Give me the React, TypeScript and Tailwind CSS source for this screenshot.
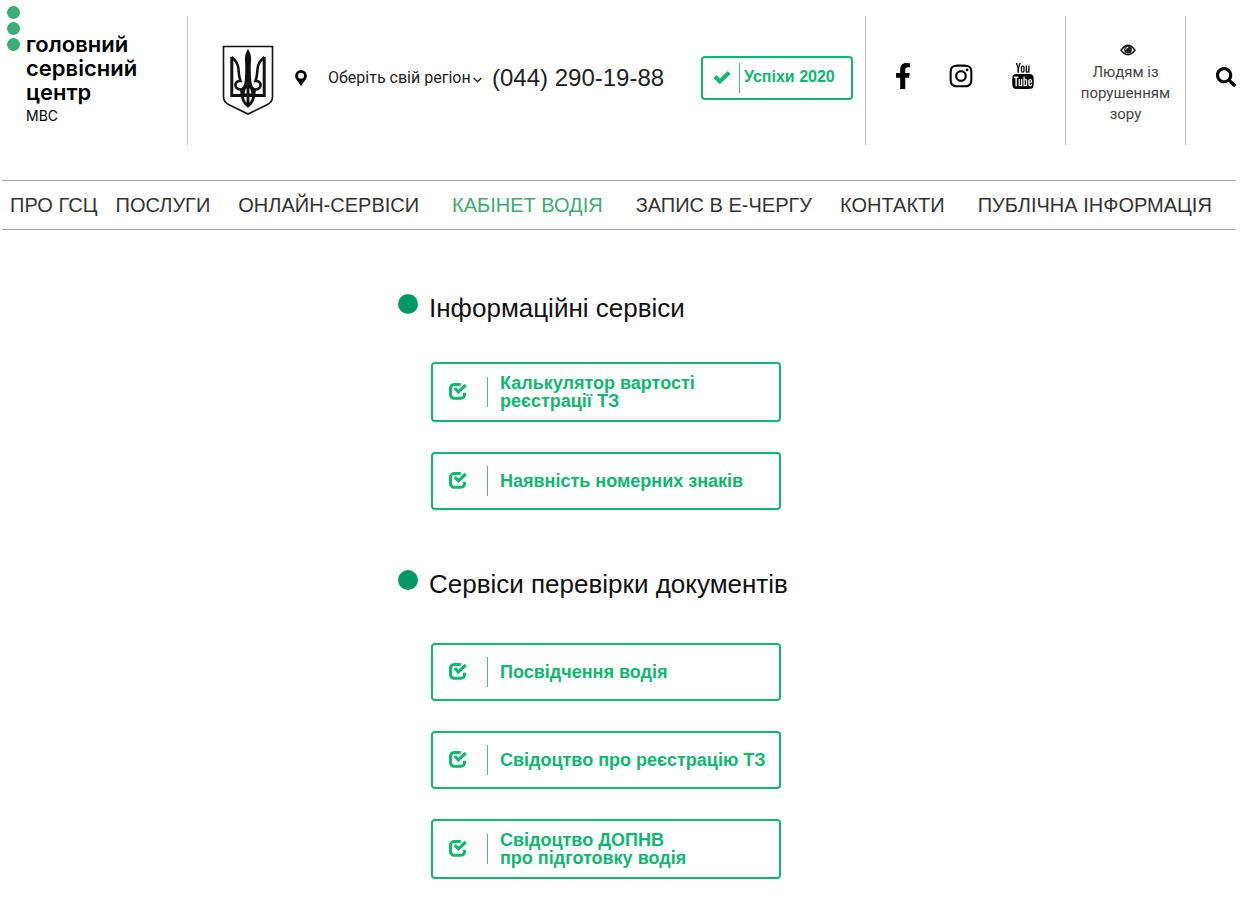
import clsx from "clsx";
import { FaFacebookF, FaInstagram, FaSearch } from "react-icons/fa";
import { TfiYoutube } from "react-icons/tfi";

const navItems = [
  { label: "ПРО ГСЦ", spacing: "ml-2" },
  { label: "ПОСЛУГИ", spacing: "ml-[18px]" },
  { label: "ОНЛАЙН-СЕРВІСИ", spacing: "ml-7" },
  { label: "КАБІНЕТ ВОДІЯ", spacing: "ml-[33px]", active: true },
  { label: "ЗАПИС В Е-ЧЕРГУ", spacing: "ml-[33px]" },
  { label: "КОНТАКТИ", spacing: "ml-7" },
  { label: "ПУБЛІЧНА ІНФОРМАЦІЯ", spacing: "ml-[33px]" },
];

const CheckBoxIcon = () => (
  <svg viewBox="0 0 18 18" className="h-[18px] w-[18px] shrink-0" fill="none" stroke="currentColor" aria-hidden="true">
    <path d="M11.800 1.500H5A3.600 3.600 0 0 0 1.500 5.100v6.500A3.600 3.600 0 0 0 5 15.200h7.100a3.400 3.400 0 0 0 3.400-3.400v-2" strokeWidth="3" />
    <path d="M5.700 5.200l3.700 3.700 7.400-6.900" strokeWidth="3.200" />
  </svg>
);

const TickIcon = () => (
  <svg viewBox="0 0 18 14" className="h-[14px] w-[18px] shrink-0" fill="none" stroke="currentColor" aria-hidden="true">
    <path d="M1.800 5.500l5 4.900L16.200 1.500" strokeWidth="4" />
  </svg>
);

const CoatOfArms = () => (
  <svg viewBox="0 0 52 72" className="h-[72px] w-[52px] shrink-0" fill="none" stroke="#111" aria-label="Герб України">
    <path d="M1.500 1.500h49v50q0 6-6 8.500L26 69 7.500 60Q1.500 57.500 1.500 51.500z" strokeWidth="1.600" />
    <path d="M9.800 12v38.500h32.400V12" strokeWidth="3" />
    <path
      d="M9.500 12q6.500 5 7 12c.3 5 .5 8 2 12q-5 0-5 4t5 4.500q4.500 0 5.500-8L25 22M42.500 12q-6.500 5-7 12c-.3 5-.5 8-2 12q5 0 5 4t-5 4.500q-4.500 0-5.500-8L27 22"
      strokeWidth="2.600"
    />
    <path d="M26 6q-2.500 4-2 10L25 34h2l1-18Q28.500 10 26 6z" fill="#111" strokeWidth="2" />
    <path d="M26 32v29M19.500 44q0 13 6.500 17 6.500-4 6.500-17M26 40q-5 3-5 10h10q0-7-5-10M10 50.500h32" strokeWidth="2.800" />
  </svg>
);

const PinIcon = () => (
  <svg viewBox="0 0 12 16" className="h-4 w-3 shrink-0" aria-hidden="true">
    <path fillRule="evenodd" d="M6 0a5.900 5.900 0 0 1 5.900 5.900C11.900 9 9 11 6 16 3 11 .1 9 .1 5.900A5.900 5.900 0 0 1 6 0zm0 2.800a3 3 0 1 0 0 6 3 3 0 0 0 0-6z" />
  </svg>
);

const ArrowIcon = () => (
  <svg viewBox="0 0 9 6" className="mt-1 h-[6px] w-[9px] shrink-0" fill="none" stroke="#222" aria-hidden="true">
    <path d="M.7.9l3.800 3.800L8.300.9" strokeWidth="1.400" />
  </svg>
);

const EyeIcon = () => (
  <svg viewBox="0 0 16 12" className="ml-1 h-3 w-4" aria-hidden="true">
    <path d="M1 6.200Q8-3.500 15 6.200 8 15 1 6.200z" fill="none" stroke="#222" strokeWidth="1.600" />
    <circle cx="8" cy="5.500" r="3.900" fill="#222" />
    <path d="M5.800 5.500A2.200 2.200 0 0 1 8 3.300" fill="none" stroke="#fff" strokeWidth="1" />
  </svg>
);

const ServiceLink = ({ lines }: { lines: string[] }) => (
  <a
    href="#"
    className={clsx(
      "flex items-center rounded-[4px] border-2 border-[#0cb96f] pl-4 text-lg leading-[18px] font-bold text-[#0cb96f]",
      lines.length > 1 ? "h-[60px]" : "h-[58px]"
    )}
  >
    <CheckBoxIcon />
    <span className="ml-5 h-[30px] shrink-0 border-l border-[#3ac78b]" />
    <span className="ml-3">
      {lines.map((line) => (
        <span key={line} className="block">
          {line}
        </span>
      ))}
    </span>
  </a>
);

const SectionTitle = ({ children }: { children: string }) => (
  <h2 className="flex gap-[11px] text-[26px] leading-[30px] text-[#111]">
    <span className="mt-px h-5 w-5 shrink-0 rounded-full bg-[#009966]" />
    <span className="whitespace-nowrap">{children}</span>
  </h2>
);

const App = () => {
  return (
    <div className="bg-white font-['Liberation_Sans',Arial,sans-serif] text-[#222]">
      <header className="flex items-stretch pt-4">
        <a href="#" className="-mt-4 flex w-[187px] shrink-0 gap-[6px] pt-[6px] pl-[7px] text-black">
          <span className="flex flex-col gap-[3px]">
            <span className="h-[13px] w-[13px] rounded-full bg-[#39ae70]" />
            <span className="h-[13px] w-[13px] rounded-full bg-[#39ae70]" />
            <span className="h-[13px] w-[13px] rounded-full bg-[#39ae70]" />
          </span>
          <span className="pt-[26px] font-[Inter,sans-serif] text-[22px] leading-6 font-semibold">
            головний
            <br />
            сервісний
            <br />
            центр
            <span className="block text-sm leading-6 font-normal">МВС</span>
          </span>
        </a>

        <div className="flex h-[129px] flex-1 items-center border-x border-[#c4c4c4] pr-3 pl-[34px]">
          <CoatOfArms />
          <div className="flex flex-1 items-center pb-[6px]">
            <label className="ml-[21px] flex items-center" aria-label="Регіон">
              <PinIcon />
              <select className="ml-[21px] w-[145px] appearance-none bg-transparent font-[Roboto,sans-serif] text-base">
                <option>Оберіть свій регіон</option>
              </select>
              <ArrowIcon />
            </label>
            <a href="tel:0442901988" className="ml-[10px] text-2xl whitespace-nowrap">
              (044) 290-19-88
            </a>
            <a
              href="#"
              className="ml-auto flex h-11 w-[152px] shrink-0 items-center rounded-[4px] border-2 border-[#0cb96f] pl-[10px] text-base font-bold text-[#0cb96f]"
            >
              <TickIcon />
              <span className="ml-2 h-[30px] border-l border-[#3ac78b]" />
              <span className="ml-1 pb-[2px] whitespace-nowrap">Успіхи 2020</span>
            </a>
          </div>
        </div>

        <div className="flex w-[199px] shrink-0 items-center pb-[10px] pl-6 text-black">
          <a href="#" aria-label="Facebook">
            <FaFacebookF size={26} />
          </a>
          <a href="#" aria-label="Instagram" className="ml-8">
            <FaInstagram size={26} />
          </a>
          <a href="#" aria-label="YouTube" className="ml-9">
            <TfiYoutube size={26} />
          </a>
        </div>

        <a
          href="#"
          className="flex w-[121px] shrink-0 flex-col items-center justify-center gap-[6px] border-x border-[#c4c4c4] px-3 pt-2 text-center font-[Roboto,sans-serif] text-[15px] leading-[21px] text-[#444]"
        >
          <EyeIcon />
          <span>Людям із порушенням зору</span>
        </a>

        <div className="flex w-[63px] shrink-0 items-center justify-end pr-[13px] pb-2">
          <button type="button" aria-label="Пошук">
            <FaSearch className="h-5 w-5 text-black" />
          </button>
        </div>
      </header>

      <nav className="mt-[35px] mr-[13px] ml-[2px] flex h-[50px] items-center border-y border-[#aaa] text-xl">
        {navItems.map((item) => (
          <a
            key={item.label}
            href="#"
            className={clsx("whitespace-nowrap", item.spacing, item.active ? "text-[#39ae70]" : "text-[#333]")}
          >
            {item.label}
          </a>
        ))}
      </nav>

      <main className="flex justify-center pt-[63px] pr-[70px] pb-[30px]">
        <div className="w-[383px]">
          <section>
            <SectionTitle>Інформаційні сервіси</SectionTitle>
            <div className="mt-[39px] ml-[33px] flex flex-col gap-[30px]">
              <ServiceLink lines={["Калькулятор вартості", "реєстрації ТЗ"]} />
              <ServiceLink lines={["Наявність номерних знаків"]} />
            </div>
          </section>
          <section className="mt-[59px]">
            <SectionTitle>Сервіси перевірки документів</SectionTitle>
            <div className="mt-11 ml-[33px] flex flex-col gap-[30px]">
              <ServiceLink lines={["Посвідчення водія"]} />
              <ServiceLink lines={["Свідоцтво про реєстрацію ТЗ"]} />
              <ServiceLink lines={["Свідоцтво ДОПНВ", "про підготовку водія"]} />
            </div>
          </section>
        </div>
      </main>
    </div>
  );
};

export default App;
